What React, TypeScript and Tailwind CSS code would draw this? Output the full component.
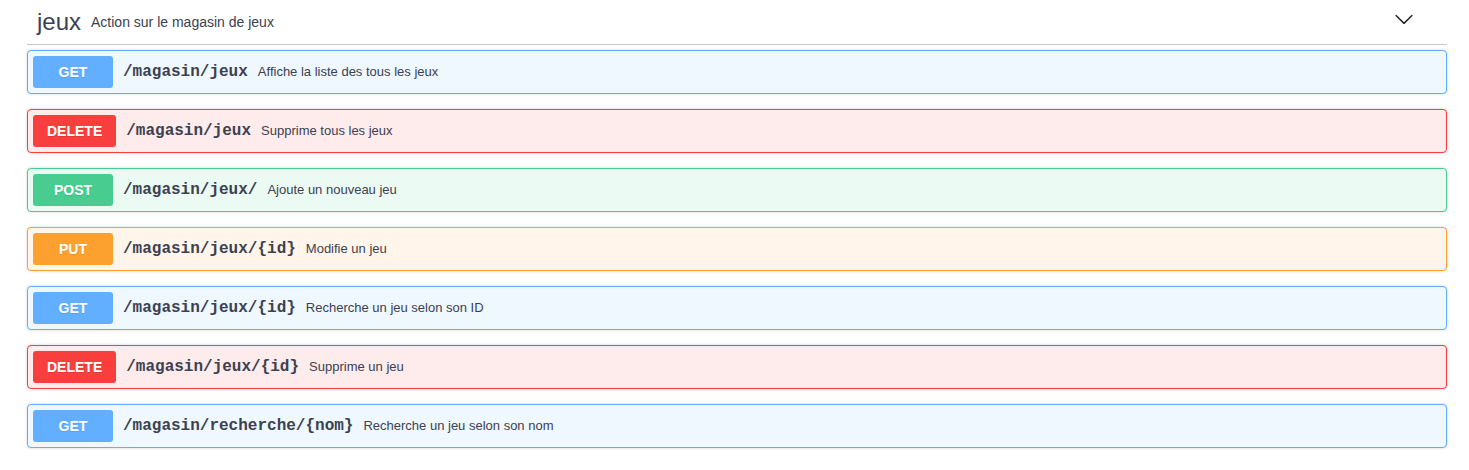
const ops = [
  { method: "GET", path: "/magasin/jeux", desc: "Affiche la liste des tous les jeux" },
  { method: "DELETE", path: "/magasin/jeux", desc: "Supprime tous les jeux" },
  { method: "POST", path: "/magasin/jeux/", desc: "Ajoute un nouveau jeu" },
  { method: "PUT", path: "/magasin/jeux/{id}", desc: "Modifie un jeu" },
  { method: "GET", path: "/magasin/jeux/{id}", desc: "Recherche un jeu selon son ID" },
  { method: "DELETE", path: "/magasin/jeux/{id}", desc: "Supprime un jeu" },
  { method: "GET", path: "/magasin/recherche/{nom}", desc: "Recherche un jeu selon son nom" },
];

const styles: Record<string, { block: string; badge: string }> = {
  GET: { block: "border-[#61affe] bg-[#eff7ff]", badge: "bg-[#61affe]" },
  DELETE: { block: "border-[#f93e3e] bg-[#feebeb]", badge: "bg-[#f93e3e]" },
  POST: { block: "border-[#49cc90] bg-[#ecfaf4]", badge: "bg-[#49cc90]" },
  PUT: { block: "border-[#fca130] bg-[#fff5ea]", badge: "bg-[#fca130]" },
};

export default function App() {
  return (
    <div className="min-h-screen bg-white font-['Liberation_Sans',Arial,sans-serif] text-[#3b4151]">
      <div className="ml-[27px] w-[1420px]">
        {/* Tag header */}
        <div className="flex h-[45px] items-center border-b border-[#c4c6cb] pl-[10px] pr-[33px] mb-[5px]">
          <span className="text-[24px] leading-none">jeux</span>
          <span className="px-[10px] text-[14px]">Action sur le magasin de jeux</span>
          <svg className="ml-auto mb-[7px]" width="20" height="20" viewBox="0 0 20 20" fill="#222">
            <path d="M17.418 6.109c.272-.268.709-.268.979 0s.271.701 0 .969l-7.908 7.83c-.27.268-.707.268-.979 0l-7.908-7.83c-.27-.268-.27-.701 0-.969.271-.268.709-.268.979 0L10 13.25l7.418-7.141z" />
          </svg>
        </div>

        {/* Operations */}
        {ops.map((op, i) => {
          const s = styles[op.method];
          return (
            <div
              key={i}
              className={`mb-[15px] flex items-center rounded-[4px] border p-[5px] shadow-[0_0_3px_rgba(0,0,0,0.19)] ${s.block}`}
            >
              <span
                className={`flex h-8 min-w-[80px] items-center justify-center rounded-[3px] px-[14px] text-[14px] font-bold text-white [text-shadow:0_1px_0_rgba(0,0,0,0.1)] ${s.badge}`}
              >
                {op.method}
              </span>
              <span className="px-[10px] font-['Liberation_Mono','Courier_New',monospace] text-[16px] font-bold">
                {op.path}
              </span>
              <span className="text-[13px]">{op.desc}</span>
            </div>
          );
        })}
      </div>
    </div>
  );
}
